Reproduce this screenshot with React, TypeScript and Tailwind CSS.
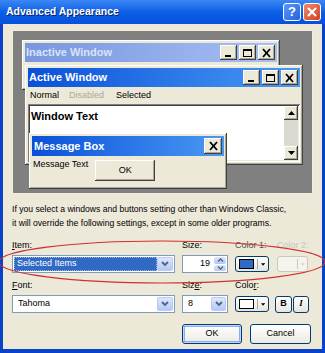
const bevel = "shadow-[inset_-1px_-1px_#404040,inset_1px_1px_#ffffff,inset_-2px_-2px_#aca899]";
const sunken = "shadow-[inset_1px_1px_#808080,inset_-1px_-1px_#ffffff,inset_2px_2px_#404040,inset_-2px_-2px_#ece9d8]";

const CapButton = ({ kind, size = "w-[17px] h-[15px]" }: { kind: "min" | "max" | "close"; size?: string }) => {
  return (
    <div className={`${size} bg-[#ece9d8] ${bevel} flex items-center justify-center`}>
      <svg width="11" height="10" viewBox="0 0 11 10">
        {kind === "min" && <rect x="2" y="7" width="6" height="2" fill="#000" />}
        {kind === "max" && (
          <g fill="none" stroke="#000">
            <rect x="1.5" y="1.5" width="8" height="7" />
            <line x1="1.5" y1="2.5" x2="9.5" y2="2.5" />
          </g>
        )}
        {kind === "close" && (
          <g stroke="#000" strokeWidth="1.8">
            <line x1="2" y1="1" x2="9" y2="9" />
            <line x1="9" y1="1" x2="2" y2="9" />
          </g>
        )}
      </svg>
    </div>
  );
};

const XpDrop = ({ w = "w-[16px]" }: { w?: string }) => {
  return (
    <div className={`${w} h-full bg-gradient-to-b from-[#dde8fc] to-[#b4c8f4] border border-[#b9cbf3] rounded-[2px] flex items-center justify-center`}>
      <svg width="8" height="6" viewBox="0 0 8 6">
        <polyline points="1,1 4,4 7,1" fill="none" stroke="#4d6185" strokeWidth="1.8" />
      </svg>
    </div>
  );
};

const ColorBtn = ({ swatch, disabled }: { swatch?: string; disabled?: boolean }) => {
  return (
    <div
      className={`h-[16px] rounded-[3px] border flex items-center px-[3px] gap-[3px] ${
        disabled ? "border-[#cac8bb] bg-[#f4f3ee]" : "border-[#003c74] bg-gradient-to-b from-[#ffffff] to-[#e6e4dc]"
      }`}
    >
      <div className={`w-[18px] h-[10px] border ${disabled ? "border-transparent" : "border-[#000]"}`} style={{ background: swatch ?? "transparent" }} />
      <div className={`w-px h-[10px] ${disabled ? "bg-[#cac8bb]" : "bg-[#aca899]"}`} />
      <svg width="5" height="3" viewBox="0 0 5 3">
        <polygon points="0,0 5,0 2.5,3" fill={disabled ? "#cac8bb" : "#000"} />
      </svg>
    </div>
  );
};

export default function App() {
  return (
    <div
      className="relative w-[325px] h-[353px] overflow-hidden bg-[#0842c8] flex flex-col text-[9px] text-black"
      style={{ fontFamily: '"Liberation Sans", Arial, sans-serif' }}
    >
      {/* title bar */}
      <div className="h-[24px] shrink-0 bg-gradient-to-b from-[#3b87f5] via-[#0b5fe6] to-[#0650dc] flex items-center pl-[6px] pr-[4px]">
        <span className="text-white font-bold text-[10.5px] [text-shadow:1px_1px_#0a246a]">Advanced Appearance</span>
        <div className="ml-auto flex gap-[2px]">
          <div className="w-[18px] h-[18px] rounded-[3px] border border-white bg-gradient-to-br from-[#5d97f7] to-[#2262e0] flex items-center justify-center text-white font-bold text-[13px]">
            ?
          </div>
          <div className="w-[18px] h-[18px] rounded-[3px] border border-white bg-gradient-to-br from-[#e98b6d] to-[#d2401d] flex items-center justify-center">
            <svg width="10" height="10" viewBox="0 0 10 10">
              <g stroke="#fff" strokeWidth="2">
                <line x1="1" y1="1" x2="9" y2="9" />
                <line x1="9" y1="1" x2="1" y2="9" />
              </g>
            </svg>
          </div>
        </div>
      </div>

      {/* body */}
      <div className="flex-1 mx-[3px] mb-[4px] bg-[#ece9d8] px-[9px] flex flex-col">
        {/* preview */}
        <div className="relative mt-[6px] h-[164px] bg-[#808080] border border-[#f1efe2] shrink-0">
          {/* inactive window */}
          <div className={`absolute left-[9px] top-[9px] w-[258px] h-[50px] bg-[#ece9d8] p-[3px] ${bevel}`}>
            <div className="h-[19px] bg-gradient-to-r from-[#7a96df] to-[#a6c0f3] flex items-center pl-[1px] pr-[2px]">
              <span className="font-bold text-[11px] text-[#d8e4f8]">Inactive Window</span>
              <div className="ml-auto flex gap-[2px]">
                <CapButton kind="min" />
                <CapButton kind="max" />
                <CapButton kind="close" />
              </div>
            </div>
          </div>

          {/* active window */}
          <div className={`absolute left-[12px] top-[34px] w-[278px] h-[100px] bg-[#ece9d8] p-[3px] flex flex-col ${bevel}`}>
            <div className="h-[19px] shrink-0 bg-gradient-to-r from-[#0a50d8] to-[#4a98f4] flex items-center pl-[1px] pr-[2px]">
              <span className="font-bold text-[11px] text-white">Active Window</span>
              <div className="ml-auto flex gap-[2px]">
                <CapButton kind="min" />
                <CapButton kind="max" />
                <CapButton kind="close" />
              </div>
            </div>
            <div className="h-[17px] shrink-0 flex items-center gap-[10px] pl-[2px]">
              <span>Normal</span>
              <span className="text-[#aca899]">Disabled</span>
              <span className="ml-[2px]">Selected</span>
            </div>
            <div className={`flex-1 bg-white flex p-[2px] ${sunken}`}>
              <div className="flex-1 font-bold text-[11px] pl-[1px] pt-[2px]">Window Text</div>
              <div className="w-[14px] flex flex-col bg-[#dcdad0]">
                <div className={`h-[14px] bg-[#ece9d8] ${bevel} flex items-center justify-center`}>
                  <svg width="7" height="4" viewBox="0 0 7 4">
                    <polygon points="0,4 7,4 3.5,0" fill="#000" />
                  </svg>
                </div>
                <div className="flex-1" />
                <div className={`h-[14px] bg-[#ece9d8] ${bevel} flex items-center justify-center`}>
                  <svg width="7" height="4" viewBox="0 0 7 4">
                    <polygon points="0,0 7,0 3.5,4" fill="#000" />
                  </svg>
                </div>
              </div>
            </div>
          </div>

          {/* message box */}
          <div className={`absolute left-[16px] top-[102px] w-[198px] h-[56px] bg-[#ece9d8] p-[3px] flex flex-col ${bevel}`}>
            <div className="h-[20px] shrink-0 bg-gradient-to-r from-[#0a50d8] to-[#4a98f4] flex items-center pl-[2px] pr-[2px]">
              <span className="font-bold text-[11px] text-white">Message Box</span>
              <div className="ml-auto">
                <CapButton kind="close" size="w-[18px] h-[16px]" />
              </div>
            </div>
            <div className="flex-1 flex items-start pl-[1px] pt-[2px]">
              <span>Message Text</span>
              <div className={`ml-[7px] mt-[2px] w-[60px] h-[21px] bg-[#ece9d8] ${bevel} flex items-center justify-center`}>
                OK
              </div>
            </div>
          </div>
        </div>

        {/* description */}
        <p className="mt-[8px] leading-[14px] whitespace-nowrap text-[8.6px]">
          If you select a windows and buttons setting other than Windows Classic,
          <br />
          it will override the following settings, except in some older programs.
        </p>

        {/* row 1 */}
        <div className="mt-[10px] flex h-[12px] items-center">
          <span className="w-[170px]">
            <u>I</u>tem:
          </span>
          <span className="w-[53px]">Size:</span>
          <span className="w-[42px] text-[#555]">Color 1:</span>
          <span className="text-[#c9c7ba]">Color 2:</span>
        </div>
        <div className="mt-[3px] flex items-center h-[18px]">
          <div className="w-[163px] h-full bg-white border border-[#7f9db9] flex items-center p-[1px]">
            <div className="flex-1 h-full bg-[#316ac5] text-white flex items-center pl-[2px] border border-dotted border-[#ffffff80]">
              Selected Items
            </div>
            <XpDrop />
          </div>
          <div className="ml-[7px] w-[46px] h-full bg-white border border-[#7f9db9] flex items-center p-[1px]">
            <span className="flex-1 text-right pr-[4px]">19</span>
            <div className="w-[12px] h-full flex flex-col gap-px">
              <div className="flex-1 bg-gradient-to-b from-[#dde8fc] to-[#b4c8f4] rounded-[2px] flex items-center justify-center">
                <svg width="7" height="4" viewBox="0 0 7 4">
                  <polyline points="1,3.5 3.5,1 6,3.5" fill="none" stroke="#4d6185" strokeWidth="1.4" />
                </svg>
              </div>
              <div className="flex-1 bg-gradient-to-b from-[#dde8fc] to-[#b4c8f4] rounded-[2px] flex items-center justify-center">
                <svg width="7" height="4" viewBox="0 0 7 4">
                  <polyline points="1,0.5 3.5,3 6,0.5" fill="none" stroke="#4d6185" strokeWidth="1.4" />
                </svg>
              </div>
            </div>
          </div>
          <div className="ml-[7px] w-[34px]">
            <ColorBtn swatch="#316ac5" />
          </div>
          <div className="ml-[8px] w-[31px]">
            <ColorBtn disabled />
          </div>
        </div>

        {/* row 2 */}
        <div className="mt-[7px] flex h-[12px] items-center">
          <span className="w-[170px]">
            <u>F</u>ont:
          </span>
          <span className="w-[53px]">
            Siz<u>e</u>:
          </span>
          <span>
            Colo<u>r</u>:
          </span>
        </div>
        <div className="mt-[3px] flex items-center h-[18px]">
          <div className="w-[163px] h-full bg-white border border-[#7f9db9] flex items-center p-[1px]">
            <span className="flex-1 pl-[4px]">Tahoma</span>
            <XpDrop />
          </div>
          <div className="ml-[7px] w-[46px] h-full bg-white border border-[#7f9db9] flex items-center p-[1px]">
            <span className="flex-1 pl-[4px]">8</span>
            <XpDrop w="w-[15px]" />
          </div>
          <div className="ml-[7px] w-[34px]">
            <ColorBtn swatch="#ffffff" />
          </div>
          <div className="ml-[6px] flex gap-px">
            <div className="w-[17px] h-[17px] rounded-[3px] border border-[#003c74] bg-gradient-to-b from-white to-[#e6e4dc] flex items-center justify-center font-bold text-[9px]">
              B
            </div>
            <div className="w-[16px] h-[17px] rounded-[3px] border border-[#003c74] bg-gradient-to-b from-white to-[#e6e4dc] flex items-center justify-center font-bold italic text-[9px]" style={{ fontFamily: '"Liberation Serif", serif' }}>
              I
            </div>
          </div>
        </div>

        {/* buttons */}
        <div className="mt-[11px] flex pl-[170px] gap-[8px]">
          <div className="w-[60px] h-[20px] rounded-[3px] border border-[#003c74] bg-gradient-to-b from-white to-[#eceae0] shadow-[inset_0_0_0_1px_#c2d5f8,inset_0_0_0_2px_#89adf0] flex items-center justify-center">
            OK
          </div>
          <div className="w-[61px] h-[20px] rounded-[3px] border border-[#003c74] bg-gradient-to-b from-white to-[#eceae0] flex items-center justify-center">
            Cancel
          </div>
        </div>
      </div>

      {/* red annotation ellipse */}
      <svg className="absolute left-0 top-0 pointer-events-none" width="325" height="353" viewBox="0 0 325 353">
        <ellipse cx="162" cy="262" rx="163" ry="21" fill="none" stroke="#d03030" strokeWidth="1.2" />
      </svg>
    </div>
  );
}
